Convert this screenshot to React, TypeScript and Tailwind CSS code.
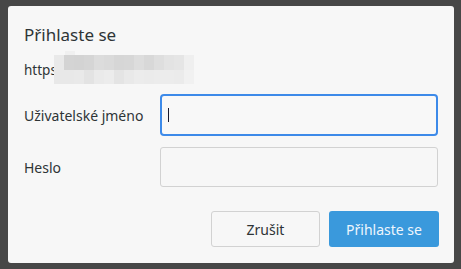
import React from "react";

const row1 = ["#e9e9e9","#d4d4d4","#d3d3d3","#d5d5d5","#dcdcdc","#dadada","#d6d6d6","#d7d7d7","#dddddd","#d8d8d8","#dedede","#e3e3e3","#e5e5e5","#efefef"];
const row2 = ["#e8e8e8","#e8e8e8","#e9e9e9","#e3e3e3","#eaeaea","#ececec","#e4e4e4","#e9e9e9","#ececec","#ebebeb","#ececec","#ececec","#ebebeb","#f1f1f1"];

export default function App() {
  return (
    <div className="w-[461px] h-[269px] bg-[#474747] pt-[6px] pl-[8px]" style={{ fontFamily: '"Noto Sans", sans-serif' }}>
      <div className="w-[446px] h-[257px] bg-[#f7f7f7] rounded-[3px] flex flex-col px-[16px] text-[#2e3436]">
        <div className="text-[17px] leading-[20px] mt-[19px]">Přihlaste se</div>
        <div className="flex items-center mt-[10px] h-[29px]">
          <span className="text-[13.5px] leading-[16px]">http</span>
          <span className="text-[13.5px] leading-[16px]">s</span>
          <div className="relative flex flex-col -ml-[3px]">
            <div className="absolute -top-[4px] left-[11px] w-[10px] h-[4px] bg-[#f0f0f0]" />
            <div className="flex">
              {row1.map((c, i) => (
                <div key={i} className="w-[10px] h-[15px]" style={{ background: c }} />
              ))}
            </div>
            <div className="flex">
              {row2.map((c, i) => (
                <div key={i} className="w-[10px] h-[14px]" style={{ background: c }} />
              ))}
            </div>
          </div>
        </div>
        <div className="flex items-center mt-[10px]">
          <div className="w-[136px] text-[14px]">Uživatelské jméno</div>
          <div className="w-[279px] h-[42px] border-2 border-[#3d8ae9] rounded-[4px] bg-[#f8f8f8] flex items-center pl-[6px]">
            <div className="w-[1px] h-[14px] bg-[#1a1a2e]" />
          </div>
        </div>
        <div className="flex items-center mt-[11px]">
          <div className="w-[136px] text-[14px]">Heslo</div>
          <div className="w-[279px] h-[40px] border border-[#d2d2d2] rounded-[3px] bg-[#f7f7f7]" />
        </div>
        <div className="flex justify-end gap-[9px] mt-[24px]">
          <button className="w-[109px] h-[36px] border border-[#d2d2d2] rounded-[3px] bg-[#f7f7f7] text-[14px] text-[#2e3436]">Zrušit</button>
          <button className="w-[110px] h-[36px] rounded-[3px] bg-[#3a99dc] text-[14px] text-[#eef6fc] mr-[-1px]">Přihlaste se</button>
        </div>
      </div>
    </div>
  );
}
